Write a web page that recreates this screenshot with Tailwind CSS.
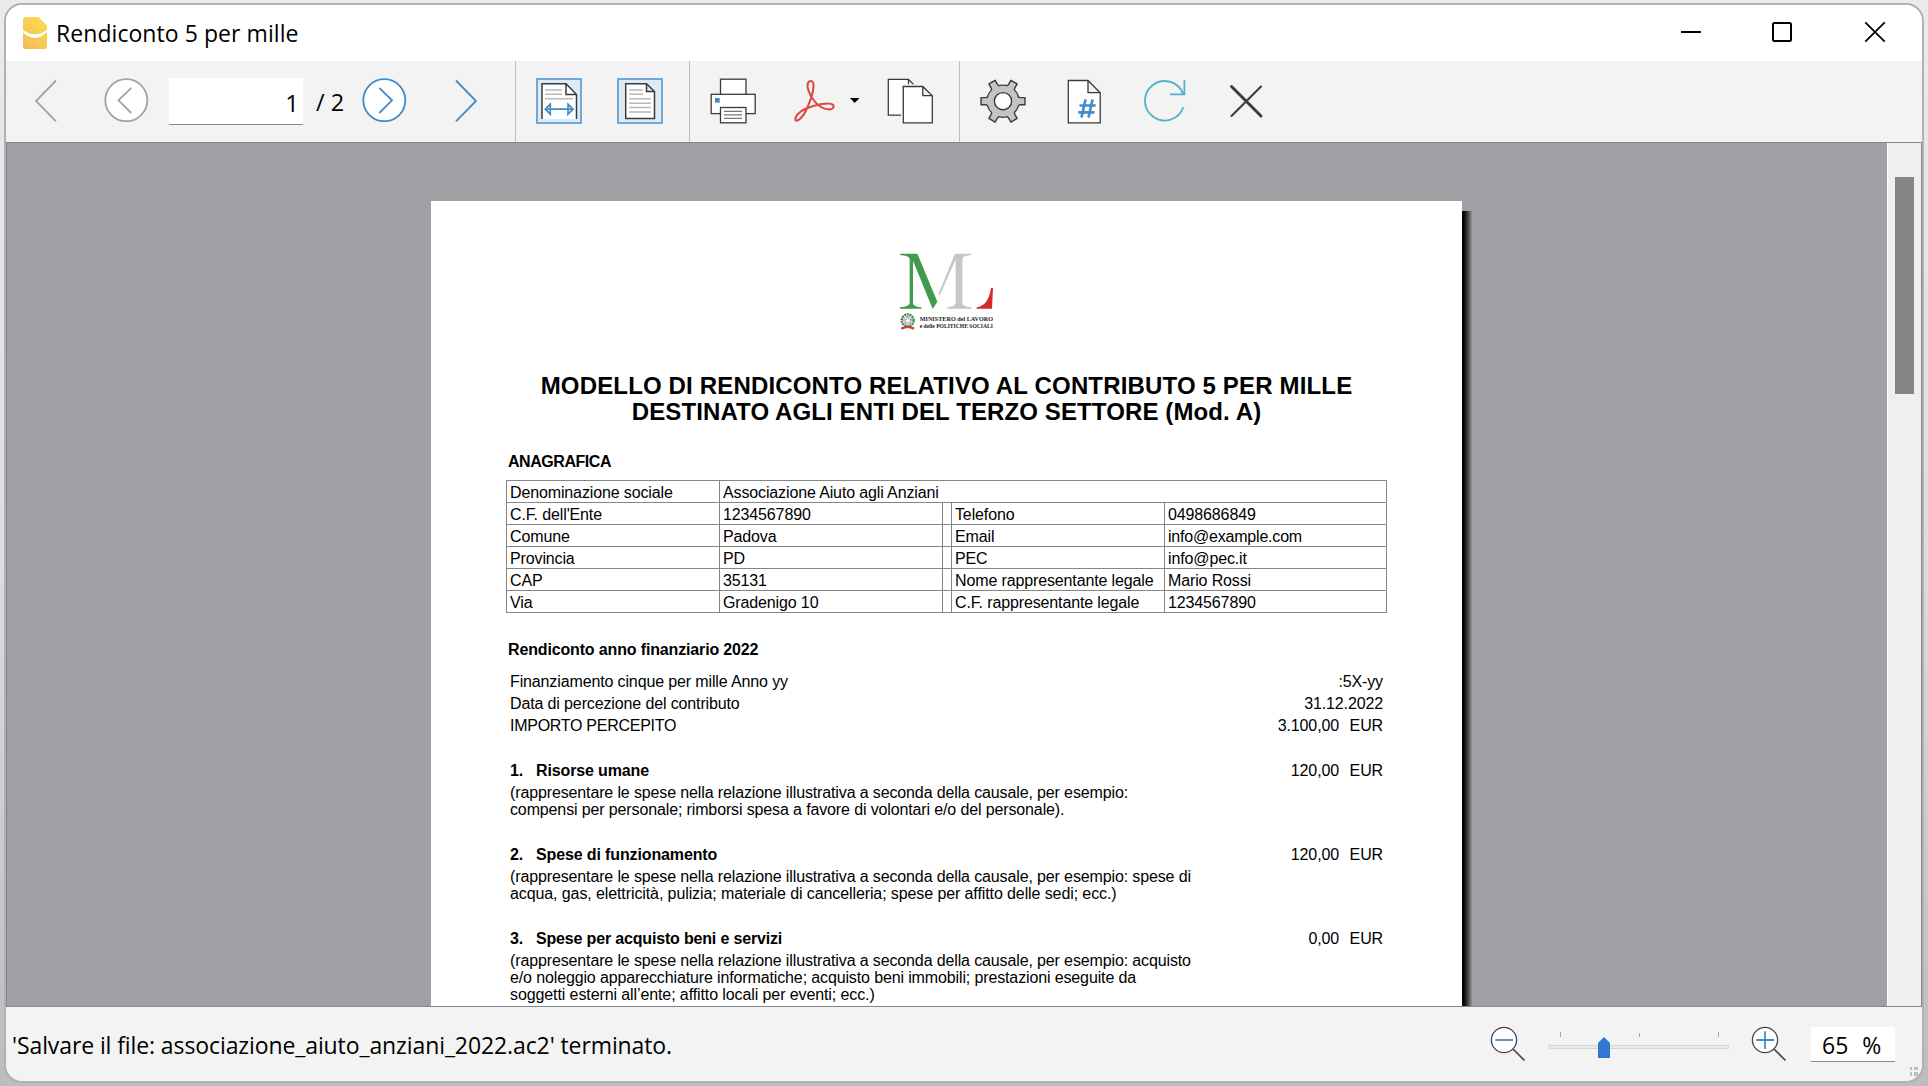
<!DOCTYPE html>
<html lang="it">
<head>
<meta charset="utf-8">
<title>Rendiconto 5 per mille</title>
<script src="https://cdn.jsdelivr.net/npm/@tailwindcss/browser@4"></script>
</head>
<body class="h-[1086px] w-[1928px] overflow-hidden bg-linear-to-b from-[#ebebeb] via-[#dedede] to-[#bcbcbc] pt-[3px] pl-1 font-['Open_Sans',sans-serif] text-[23px] text-black">
<div class="flex h-[1080px] w-[1920px] flex-col overflow-hidden rounded-[18px] border-2 border-[#b1b1b1] bg-[#f3f3f3]">

  <!-- Title bar -->
  <header class="flex h-14 shrink-0 items-center bg-white pl-[17px]">
    <svg class="h-8 w-6" viewBox="0 0 24 32">
      <defs><linearGradient id="g" x1="0.8" y1="0" x2="0.2" y2="1"><stop offset="0" stop-color="#fbdc4e"/><stop offset="1" stop-color="#f4bb5c"/></linearGradient></defs>
      <path d="M2.5 0H15.500L24 8.500V29.500Q24 32 21.500 32H2.500Q0 32 0 29.500V2.500Q0 0 2.500 0Z" fill="url(#g)"/>
      <path d="M0 13Q12 21.500 24 13V15Q12 26.500 0 15.500Z" fill="#fff"/>
    </svg>
    <h1 class="ml-[9px] tracking-[0.06px] whitespace-nowrap">Rendiconto 5 per mille</h1>
    <div class="mr-[35px] ml-auto flex items-center pb-[3px]">
      <svg class="mr-[67px] h-6 w-6" viewBox="0 0 24 24"><path d="M2 12H22" stroke="#000" stroke-width="2"/></svg>
      <svg class="mr-[69px] h-6 w-6" viewBox="0 0 24 24"><rect x="3" y="3" width="18" height="18" rx="1.500" fill="none" stroke="#000" stroke-width="2"/></svg>
      <svg class="h-6 w-6" viewBox="0 0 24 24"><path d="M2.300 2.300L21.700 21.700M21.700 2.300L2.300 21.700" stroke="#000" stroke-width="1.800"/></svg>
    </div>
  </header>

  <!-- Toolbar -->
  <nav class="flex h-[81px] shrink-0 items-center pb-px">
    <svg class="ml-7 h-12 w-6" viewBox="34 77 24 48" fill="none" stroke="#a3a3a3" stroke-width="1.800"><path d="M56 80.500L36 101L56 121.300"/></svg>
    <svg class="ml-11 h-12 w-12" viewBox="102 77 48 48" fill="none" stroke="#a3a3a3" stroke-width="1.800"><circle cx="126.300" cy="100.200" r="21" fill="#fff"/><path d="M131.300 87.800L118.500 100.300L131.300 113"/></svg>
    <div class="ml-[19px] flex h-[47px] w-[134px] items-center justify-end border-b border-[#8a8a8a] bg-white pr-[4px] pt-1 text-[24px]">1</div>
    <div class="w-[57px] pt-[3px] pl-[13px] text-[23.5px] whitespace-nowrap">/ 2</div>
    <svg class="h-12 w-12" viewBox="360 77 48 48" fill="none" stroke="#428bca" stroke-width="1.800"><circle cx="384.300" cy="100.200" r="21" fill="#fff"/><path d="M379.300 87.800L392 100.300L379.300 113"/></svg>
    <svg class="ml-[46px] h-12 w-6" viewBox="454 77 24 48" fill="none" stroke="#428bca" stroke-width="1.800"><path d="M456 80.500L476 101L456 121.300"/></svg>
    <div class="ml-[37px] -mb-px h-[81px] w-px bg-[#bcbcbc]"></div>
    <svg class="ml-[19px] h-12 w-12" viewBox="535 77 48 48" fill="none">
      <rect x="537" y="79" width="44" height="44" fill="#deebf7" stroke="#5596cd" stroke-width="1.600"/>
      <path d="M542 119V83.700H566L576.500 94.500V119Z" fill="#fff"/>
      <path d="M542 119V83.700H566L576.500 94.500V119M566 83.700V94.500H576.500" fill="#fff" stroke="#3a3a3a" stroke-width="1.500"/>
      <path d="M545 90H562M545 94.200H562M545 98.700H573" stroke="#b9b9b9" stroke-width="1.500"/>
      <path d="M546 109.200H572M550.300 104.200L545.300 109.200L550.300 114.200ZM568 104.200L573 109.200L568 114.200Z" stroke="#428bca" stroke-width="1.700"/>
    </svg>
    <svg class="ml-[33px] h-12 w-12" viewBox="616 77 48 48" fill="none">
      <rect x="618" y="79" width="44" height="44" fill="#deebf7" stroke="#5596cd" stroke-width="1.600"/>
      <path d="M625.700 118.500V83.700H646.500L654.500 91.500V118.500ZM646.500 83.700V91.500H654.500" fill="#fff" stroke="#3a3a3a" stroke-width="1.500"/>
      <path d="M629 90H643M629 94.200H643M629 98.700H651M629 103.200H651M629 107.500H651M629 112H651" stroke="#b9b9b9" stroke-width="1.500"/>
    </svg>
    <div class="ml-[25px] -mb-px h-[81px] w-px bg-[#bcbcbc]"></div>
    <svg class="ml-[19px] h-12 w-12" viewBox="709 77 48 48" fill="#fff" stroke="#3a3a3a" stroke-width="1.300">
      <rect x="720.500" y="79.200" width="25.500" height="16"/><rect x="711.200" y="94.300" width="44" height="19.300"/><rect x="720.500" y="107.500" width="25.500" height="15.300"/>
      <rect x="715" y="98" width="4.700" height="4.700" fill="#428bca" stroke="none"/>
      <path d="M724 111.300H742M724 114.800H742M724 118.300H742" stroke="#777"/>
    </svg>
    <svg class="ml-[33px] h-12 w-12" viewBox="790 77 48 48" fill="none" stroke="#dc4b43" stroke-width="2.100"><path d="M811 81C807 81 807 86 808.300 90C811 98.500 818 108 828 109.300C833 109.800 834.500 107 833 105C830 101.500 815 104.500 805 109C799 111.700 794.500 117 795.500 119.700C797 123 803 117 806 110.500C810 102 813.500 92 813.500 86C813.500 82.500 812.800 81 811 81Z"/></svg>
    <svg class="ml-[11px] h-12 w-3" viewBox="849 77 12 48"><path d="M850 98H859.500L854.700 103Z"/></svg>
    <svg class="ml-[25px] h-12 w-12" viewBox="886 77 48 48" fill="#fff" stroke="#3a3a3a" stroke-width="1.300">
      <path d="M888.300 115.200V79.300H908.500L913.500 84.500V115.200Z" stroke="none"/><path d="M901 115.200H888.300V79.300H908.500L913.500 84.500M908.500 79.300V84.500" fill="none"/>
      <path d="M901.500 84.500H924L934 95V125H901.500Z" fill="#f3f3f3" stroke="none"/>
      <path d="M903.300 122.800V86.500H922.800L932.300 95.700V122.800ZM922.800 86.500V95.700H932.300"/>
    </svg>
    <div class="ml-[25px] -mb-px h-[81px] w-px bg-[#bcbcbc]"></div>
    <svg class="ml-[19px] h-12 w-12" viewBox="979 77 48 48">
      <g transform="translate(1003 101.200)">
        <g fill="#c4c4c4" stroke="#3a3a3a" stroke-width="1.400" stroke-linejoin="round">
          <circle r="16"/>
          <path id="t" d="M13 -5.200L17 -3.600H22V3.600H17L13 5.200Z"/>
          <use href="#t" transform="rotate(60)"/><use href="#t" transform="rotate(120)"/><use href="#t" transform="rotate(180)"/><use href="#t" transform="rotate(240)"/><use href="#t" transform="rotate(300)"/>
        </g>
        <circle r="15.400" fill="#c4c4c4"/><circle r="8.600" fill="#fff" stroke="#3a3a3a" stroke-width="1.400"/>
      </g>
    </svg>
    <svg class="ml-[33px] h-12 w-12" viewBox="1060 77 48 48" fill="#fff" stroke="#3a3a3a" stroke-width="1.300">
      <path d="M1068.300 122.800V80.500H1088L1100.200 92.700V122.800ZM1088 80.500V92.700H1100.200"/>
      <path d="M1085.500 99.500L1081.500 117.500M1092.500 99.500L1088.500 117.500M1079.500 105.500H1095.700M1078.300 112.300H1094.500" stroke="#428bca" stroke-width="2.700"/>
    </svg>
    <svg class="ml-[33px] h-12 w-12" viewBox="1141 77 48 48" fill="none" stroke="#52b3cc" stroke-width="1.900"><path d="M1183.300 107.300A19.700 19.700 0 1 1 1183 93.500M1184.400 80.300V94.400H1170"/></svg>
    <svg class="ml-[33px] h-12 w-12" viewBox="1222 77 48 48" stroke="#3a3a3a" stroke-linecap="round"><path d="M1231.500 86.500L1261 116" stroke-width="2.900"/><path d="M1261 86.500L1231.500 116" stroke-width="2.100"/></svg>
  </nav>

  <!-- Document preview -->
  <main class="flex h-[865px] shrink-0 border border-[#82878f] bg-[#a09fa4]">
    <div class="flex h-full w-[1880px] items-start overflow-hidden pt-[58px] pl-[424px]">
      <article class="h-[1400px] w-[1031px] shrink-0 bg-white px-[75px] pt-[49px] font-['Liberation_Sans',sans-serif] text-[16px] leading-[22px] tracking-[-0.13px]">
        <svg class="ml-[391px] h-[84px] w-[100px]" viewBox="111 60 300 252">
          <path d="M120 71H172L232 215L218 237L159 92V220Q161 231 184 232V236H120V232Q147 230 149 220V86Q146 77 120 75Z" fill="#43994c"/>
          <path d="M285 71H335V75Q308 77 307 86V220Q308 230 335 232V236H262V232Q286 230 287 220V88L240 195L235 193Z" fill="#c6c6c6"/>
          <path d="M350 232Q385 228 393 174H399L396 236H350Z" fill="#cf2b2b"/>
          <circle cx="143" cy="271" r="18" fill="none" stroke="#3f8a4c" stroke-width="7" stroke-dasharray="6 2"/>
          <circle cx="143" cy="271" r="12" fill="#eee" stroke="#888" stroke-width="3" stroke-dasharray="3 2"/>
          <path d="M143 259L146 268H155L148 273L151 282L143 277L135 282L138 273L131 268H140Z" fill="#fff" stroke="#777" stroke-width="1.500"/>
          <path d="M122 293Q143 281 164 293L160 299Q143 289 126 299Z" fill="#c9403c"/>
          <g font-family="Liberation Serif, serif" font-weight="bold" fill="#222" font-size="18" letter-spacing="0"><text x="179" y="273" textLength="220" lengthAdjust="spacingAndGlyphs">MINISTERO del LAVORO</text><text x="179" y="294" textLength="220" lengthAdjust="spacingAndGlyphs">e delle POLITICHE SOCIALI</text></g>
        </svg>
        <h2 class="mt-[39px] text-center text-[24px] leading-[26px] font-bold whitespace-nowrap"><span class="tracking-[0.16px]">MODELLO DI RENDICONTO RELATIVO AL CONTRIBUTO 5 PER MILLE</span><br><span class="tracking-[0.11px]">DESTINATO AGLI ENTI DEL TERZO SETTORE (Mod. A)</span></h2>
        <h3 class="mt-[26px] ml-[2px] font-bold tracking-[-0.45px]">ANAGRAFICA</h3>
        <div class="mt-[7px] grid w-[881px] grid-cols-[213px_223px_9px_213px_223px] grid-rows-[repeat(6,22px)] border-r border-b border-[#858585] *:border-t *:border-l *:border-[#858585] *:pt-px *:pl-[3px] *:whitespace-nowrap">
          <div>Denominazione sociale</div><div class="col-span-4">Associazione Aiuto agli Anziani</div>
          <div>C.F. dell'Ente</div><div>1234567890</div><div></div><div>Telefono</div><div>0498686849</div>
          <div>Comune</div><div>Padova</div><div></div><div>Email</div><div class="tracking-[-0.2px]">info@example.com</div>
          <div>Provincia</div><div>PD</div><div></div><div>PEC</div><div>info@pec.it</div>
          <div>CAP</div><div>35131</div><div></div><div>Nome rappresentante legale</div><div>Mario Rossi</div>
          <div>Via</div><div>Gradenigo 10</div><div></div><div>C.F. rappresentante legale</div><div>1234567890</div>
        </div>
        <h3 class="mt-[26px] ml-[2px] font-bold tracking-[-0.15px]">Rendiconto anno finanziario 2022</h3>
        <div class="mt-[10px] mr-1 ml-1">
          <div class="flex justify-between"><span>Finanziamento cinque per mille Anno yy</span><span>:5X-yy</span></div>
          <div class="flex justify-between"><span>Data di percezione del contributo</span><span>31.12.2022</span></div>
          <div class="flex"><span class="tracking-[-0.27px]">IMPORTO PERCEPITO</span><span class="ml-auto">3.100,00</span><span class="w-[44px] text-right">EUR</span></div>

          <div class="mt-[23px] flex"><b class="w-[26px]">1.</b><b>Risorse umane</b><span class="ml-auto">120,00</span><span class="w-[44px] text-right">EUR</span></div>
          <p class="mt-[2px] leading-[17px] whitespace-nowrap">(rappresentare le spese nella relazione illustrativa a seconda della causale, per esempio:<br>compensi per personale; rimborsi spesa a favore di volontari e/o del personale).</p>

          <div class="mt-[26px] flex"><b class="w-[26px]">2.</b><b>Spese di funzionamento</b><span class="ml-auto">120,00</span><span class="w-[44px] text-right">EUR</span></div>
          <p class="mt-[2px] leading-[17px] whitespace-nowrap">(rappresentare le spese nella relazione illustrativa a seconda della causale, per esempio: spese di<br><span class="tracking-[-0.1px]">acqua, gas, elettricità, pulizia; materiale di cancelleria; spese per affitto delle sedi; ecc.)</span></p>

          <div class="mt-[26px] flex"><b class="w-[26px]">3.</b><b class="tracking-[-0.17px]">Spese per acquisto beni e servizi</b><span class="ml-auto">0,00</span><span class="w-[44px] text-right">EUR</span></div>
          <p class="mt-[2px] leading-[17px] whitespace-nowrap">(rappresentare le spese nella relazione illustrativa a seconda della causale, per esempio: acquisto<br>e/o noleggio apparecchiature informatiche; acquisto beni immobili; prestazioni eseguite da<br><span class="tracking-[-0.1px]">soggetti esterni all’ente; affitto locali per eventi; ecc.)</span></p>
        </div>
      </article>
      <div class="mt-[10px] h-[1400px] w-[10px] bg-linear-to-r from-black via-[#333] to-[#96959a]"></div>
    </div>
    <div class="flex-1 border-l border-white bg-[#efefef] pt-[34px] pl-[7px]"><div class="h-[217px] w-[19px] bg-[#858585]"></div></div>
  </main>

  <!-- Status bar -->
  <footer class="relative flex flex-1 items-center pt-px pl-[6px]">
    <span class="pt-px tracking-[-0.1px] whitespace-nowrap">'Salvare il file: associazione_aiuto_anziani_2022.ac2' terminato.</span>
    <svg class="ml-auto h-10 w-10" viewBox="1488 1025 40 40" fill="none" stroke="#444" stroke-width="1.300"><circle cx="1504" cy="1040" r="12.600" fill="#fff"/><path d="M1513 1049L1524.500 1060.500" stroke-width="1.700"/><path d="M1495.300 1040H1513" stroke="#428bca" stroke-width="1.800"/></svg>
    <svg class="ml-[17px] h-10 w-[190px]" viewBox="1545 1025 190 40"><rect x="1549.500" y="1045.500" width="179" height="3" fill="#e7eaea" stroke="#d6d6d6"/><path d="M1560.500 1032V1037M1639.500 1033V1037M1718.500 1032V1037" stroke="#a5a598"/><path d="M1598 1058V1043L1604 1037L1610 1043V1058Z" fill="#3277d2"/></svg>
    <svg class="ml-[14px] h-10 w-10" viewBox="1749 1025 40 40" fill="none" stroke="#444" stroke-width="1.300"><circle cx="1765" cy="1040" r="12.600" fill="#fff"/><path d="M1774 1049L1785.500 1060.500" stroke-width="1.700"/><path d="M1756.300 1040H1774M1765 1031.300V1049" stroke="#428bca" stroke-width="1.800"/></svg>
    <div class="mr-[27px] ml-[22px] flex h-[35px] w-[84px] items-center gap-[14px] border-b border-[#8a8a8a] bg-white pt-[3px] pl-[11px]"><span>65</span><span>%</span></div>
    <svg class="absolute right-[4px] bottom-[4px] h-[10px] w-2" viewBox="0 0 8 10" fill="#bdbdbd"><path d="M0 0H2V3H0ZM4 0H8V3H4ZM0 5H2V9H0ZM4 5H8V9H4Z"/></svg>
  </footer>
</div>
</body>
</html>
